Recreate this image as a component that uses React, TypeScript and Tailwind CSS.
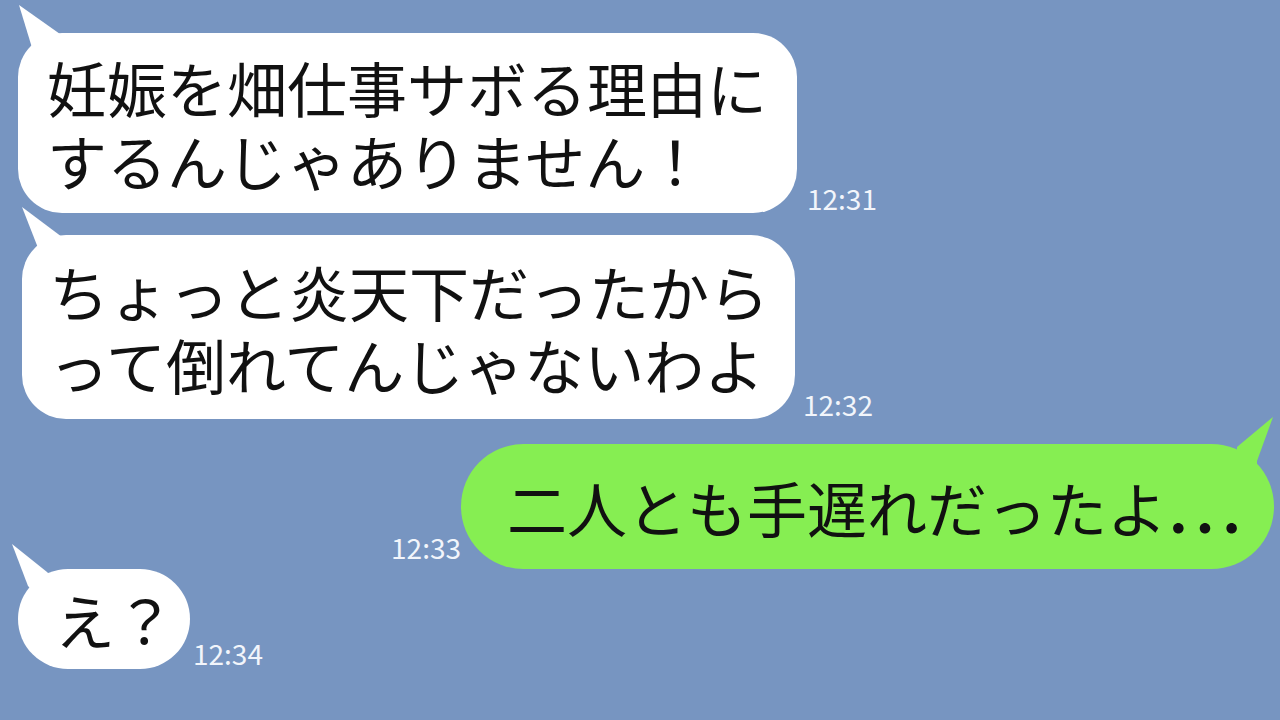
import React from "react";

const FONT = { fontFamily: '"Noto Sans CJK JP", "Noto Sans", sans-serif' };

function LeftTail({ tip, a, b }: { tip: [number, number]; a: [number, number]; b: [number, number] }) {
  // coordinates relative to bubble top-left; svg offset by 40,40
  const pts = [tip, a, [a[0] + 20, a[1] + 20], [b[0] + 20, b[1] + 20], b]
    .map((p) => `${p[0] + 40},${p[1] + 40}`)
    .join(" ");
  return (
    <svg className="absolute left-[-40px] top-[-40px] pointer-events-none" width="120" height="120" viewBox="0 0 120 120">
      <polygon points={pts} fill="#ffffff" />
    </svg>
  );
}

export default function App() {
  return (
    <div className="w-[1280px] h-[720px] bg-[#7795c1] overflow-hidden flex flex-col" style={FONT}>
      {/* Row 1 */}
      <div className="flex items-end ml-[18px] mt-[33px]">
        <div className="relative bg-white rounded-[44px] pl-[29px] pr-[30px] py-[17px] text-[60px] leading-[73px] text-[#111] whitespace-nowrap">
          <LeftTail tip={[1, -28]} a={[15, 18]} b={[42, 1]} />
          <div className="relative">妊娠を畑仕事サボる理由に</div>
          <div className="relative">するんじゃありません！</div>
        </div>
        <div className="ml-[10px] mb-[1px] text-[28px] leading-none text-[#f2f5fb]">12:31</div>
      </div>

      {/* Row 2 */}
      <div className="flex items-end ml-[22px] mt-[22px]">
        <div className="relative bg-white rounded-[44px] pl-[27px] pr-[26px] py-[19px] text-[60px] leading-[73px] text-[#111] whitespace-nowrap">
          <LeftTail tip={[0, -28]} a={[18, 18]} b={[40, 2]} />
          <div className="relative">ちょっと炎天下だったから</div>
          <div className="relative">って倒れてんじゃないわよ</div>
        </div>
        <div className="ml-[8px] mb-[1px] text-[28px] leading-none text-[#f2f5fb]">12:32</div>
      </div>

      {/* Row 3 (green, right) */}
      <div className="flex items-end justify-end mr-[6px] mt-[25px]">
        <div className="mb-[8px] text-[28px] leading-none text-[#f2f5fb]">12:33</div>
        <div className="relative bg-[#86ee52] rounded-full h-[125px] flex items-center pl-[46px] pr-[29px] text-[60px] leading-none text-[#111] whitespace-nowrap">
          <svg className="absolute right-[-40px] top-[-40px] pointer-events-none" width="120" height="120" viewBox="0 0 120 120">
            <polygon points="79,13 43,43 43,75 63,75 63,57" fill="#86ee52" />
          </svg>
          <span className="relative">
            二人とも手遅れだったよ
            <span className="relative top-[25px] -ml-[2px] text-[80px] leading-[0]">…</span>
          </span>
        </div>
      </div>

      {/* Row 4 */}
      <div className="flex items-end ml-[18px]">
        <div className="relative bg-white rounded-full h-[100px] flex items-center pl-[37px] pr-[15px] text-[60px] leading-none text-[#111] whitespace-nowrap">
          <LeftTail tip={[-6, -25]} a={[10, 17]} b={[29, 3]} />
          <span className="relative">え？</span>
        </div>
        <div className="ml-[3px] mb-[2px] text-[28px] leading-none text-[#f2f5fb]">12:34</div>
      </div>
    </div>
  );
}
